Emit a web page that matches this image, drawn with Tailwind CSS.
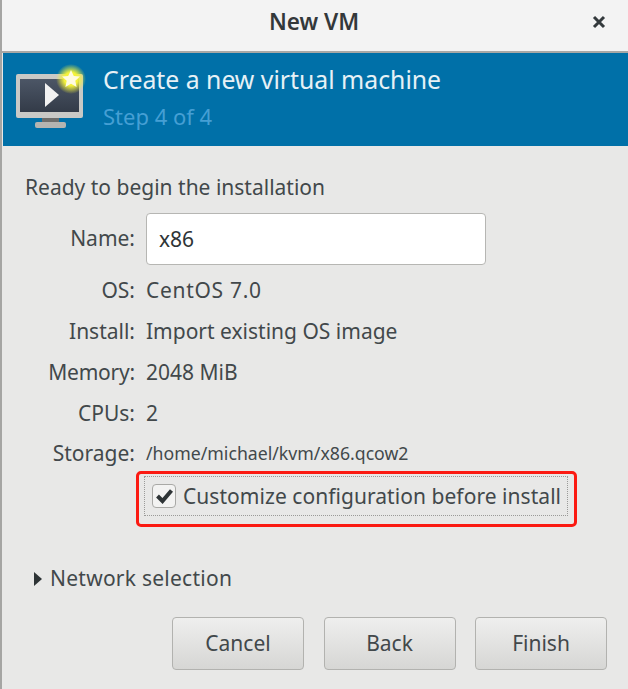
<!DOCTYPE html>
<html><head><meta charset="utf-8"><script src="https://cdn.jsdelivr.net/npm/@tailwindcss/browser@4"></script></head>
<body class="m-0 overflow-hidden">
<div class="w-[628px] h-[689px] flex flex-col bg-[#e8e8e7] border-l-2 border-[#a5a5a3] font-['Noto_Sans',sans-serif] text-[#42484b] text-[21px] overflow-hidden">
  <header class="h-[53px] shrink-0 bg-[#f3f3f3] border-b-2 border-[#a8a8a6] flex items-center relative pb-[8px]">
    <div class="w-full text-center font-semibold text-[22.5px] text-[#33383a] pr-[2px]">New VM</div>
    <svg class="absolute right-[22px] top-[15px] w-[14px] h-[14px]" viewBox="0 0 14 14"><path d="M2 2 L12 12 M12 2 L2 12" stroke="#33393c" stroke-width="3"/></svg>
  </header>
  <section class="h-[93px] shrink-0 bg-[#0070a8] flex ml-px">
    <svg class="w-[84px] h-[93px] shrink-0" viewBox="1 0 84 93">
      <defs><radialGradient id="g"><stop offset="0.45" stop-color="#f4f23a"/><stop offset="1" stop-color="#f4f23a" stop-opacity="0"/></radialGradient><linearGradient id="s" x1="0" y1="0" x2="0" y2="1"><stop offset="0" stop-color="#4c5666"/><stop offset="1" stop-color="#333b48"/></linearGradient></defs>
      <rect x="14" y="21" width="67" height="44" rx="2" fill="#c9c9c6"/>
      <rect x="18" y="26" width="59" height="33" fill="url(#s)"/>
      <rect x="40" y="65" width="17" height="5" fill="#6d6d6b"/>
      <rect x="33" y="69" width="31" height="6" rx="2" fill="#b4b4b1"/>
      <path d="M43 30 L57 42 L43 54 Z" fill="#f2f2f2"/>
      <circle cx="69" cy="26" r="15" fill="url(#g)"/>
      <path d="M69 17 L71.8 23 L78 23.6 L73.3 27.8 L74.6 34 L69 30.8 L63.4 34 L64.7 27.8 L60 23.6 L66.2 23 Z" fill="#fffbe0"/>
    </svg>
    <div class="pl-[16px] flex flex-col">
      <div class="text-[24.8px] leading-[34px] mt-[9px] text-[#e6f1f6]">Create a new virtual machine</div>
      <div class="text-[22px] leading-[30px] mt-[5px] text-[#459fd4]">Step 4 of 4</div>
    </div>
  </section>
  <main class="flex-1 flex flex-col pt-[27px] pl-[23px]">
    <div class="leading-[28px]">Ready to begin the installation</div>
    <div class="grid grid-cols-[110px_1fr] gap-x-[11px] items-center mt-[12px]">
      <div class="text-right h-[52px] leading-[50px]">Name:</div>
      <div class="w-[340px] h-[52px] bg-white border border-[#b6b6b3] rounded-[4px] pl-[12px] leading-[50px] text-[#2e3436]">x86</div>
      <div class="text-right h-[41px] leading-[41px] mt-[5px] col-start-1">OS:</div>
      <div class="h-[41px] leading-[41px] mt-[5px] tracking-[0.7px]">CentOS 7.0</div>
      <div class="text-right h-[41px] leading-[41px]">Install:</div>
      <div class="h-[41px] leading-[41px]">Import existing OS image</div>
      <div class="text-right h-[41px] leading-[41px] tracking-[-0.2px]">Memory:</div>
      <div class="h-[41px] leading-[41px]">2048 MiB</div>
      <div class="text-right h-[40px] leading-[40px]">CPUs:</div>
      <div class="h-[40px] leading-[40px]">2</div>
      <div class="text-right h-[41px] leading-[41px]">Storage:</div>
      <div class="h-[41px] leading-[41px] text-[17.7px]">/home/michael/kvm/x86.qcow2</div>
    </div>
    <div class="ml-[111px] -mt-[3px] w-[441px] h-[56px] border-[3px] border-[#fb1a12] rounded-[5px] pt-[2px] pb-[8px] pl-[5px] pr-[6px]">
      <div class="h-full border border-dotted border-[#9a9a98] flex items-center pl-[7px] gap-[7px]">
        <span class="w-[24px] h-[24px] shrink-0 rounded-[4px] border border-[#a9a9a6] bg-[#f3f3f2] flex items-center justify-center">
          <svg class="w-[20px] h-[20px]" viewBox="0 0 20 20"><path d="M3.5 10 L8.5 15 L17.5 4.5" fill="none" stroke="#2e3436" stroke-width="4"/></svg>
        </span>
        <span class="whitespace-nowrap tracking-[0.05px] pt-[1px]">Customize configuration before install</span>
      </div>
    </div>
    <div class="flex items-center mt-[37px] h-[30px] ml-[9px] gap-[8px]">
      <svg class="w-[8px] h-[14px]" viewBox="0 0 8 14"><path d="M0 0 L8 7 L0 14 Z" fill="#2e3436"/></svg>
      <span class="tracking-[0.25px]">Network selection</span>
    </div>
    <div class="flex gap-[19.5px] mt-[23px] ml-[147px]">
      <button class="w-[132px] h-[53px] rounded-[4px] border border-[#b2b2af] bg-gradient-to-b from-[#efefee] to-[#d6d6d4]">Cancel</button>
      <button class="w-[132px] h-[53px] rounded-[4px] border border-[#b2b2af] bg-gradient-to-b from-[#efefee] to-[#d6d6d4]">Back</button>
      <button class="w-[132px] h-[53px] rounded-[4px] border border-[#b2b2af] bg-gradient-to-b from-[#efefee] to-[#d6d6d4]">Finish</button>
    </div>
  </main>
</div>
</body></html>
